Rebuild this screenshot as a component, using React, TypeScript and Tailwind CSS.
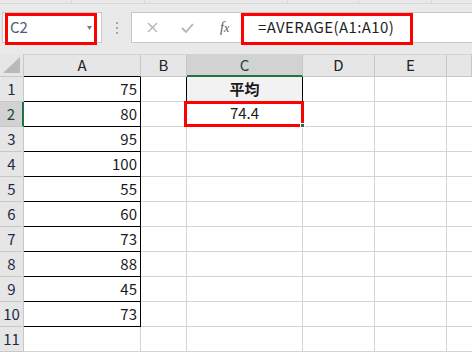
import React from "react";

const FONT = { fontFamily: '"Noto Sans CJK JP", "Noto Sans", sans-serif' };

const values = [75, 80, 95, 100, 55, 60, 73, 88, 45, 73];
const cols = ["A", "B", "C", "D", "E", ""];

const FormulaBar = () => (
  <div className="h-[54px] bg-[#e9e9e9]">
    {/* ribbon edge */}
    <div className="flex h-[4px] border-b border-[#d6d6d6]">
      <div className="w-[72px] border-r border-[#d6d6d6]" />
      <div className="w-[73px] border-r border-[#d6d6d6]" />
      <div className="w-[143px] border-r border-[#d6d6d6]" />
      <div className="w-[71px] border-r border-[#d6d6d6]" />
      <div className="w-[73px] border-r border-[#d6d6d6]" />
    </div>

    <div className="flex items-start pt-[8px]">
      {/* name box */}
      <div className="relative ml-[2px] flex h-[31px] w-[100px] items-center border border-[#c8c8c8] bg-white pl-[7px]">
        <span className="text-[15px] text-[#4a5d7a]">C2</span>
        <svg className="absolute left-[84px] top-[13px]" width="5" height="4" viewBox="0 0 5 4">
          <polygon points="0,0 5,0 2.5,4" fill="#7a7a7a" />
        </svg>
        <div className="absolute left-[2px] top-[0px] h-[32px] w-[92px] border-[3px] border-[#ff0000]" />
      </div>

      {/* splitter dots */}
      <div className="ml-[14px] mt-[10px] flex flex-col gap-[3px]">
        <span className="h-[2px] w-[2px] bg-[#a6a6a6]" />
        <span className="h-[2px] w-[2px] bg-[#a6a6a6]" />
        <span className="h-[2px] w-[2px] bg-[#a6a6a6]" />
      </div>

      {/* icons + formula */}
      <div className="relative ml-[13px] flex h-[31px] flex-1 items-center border border-r-0 border-[#c8c8c8] bg-white">
        <div className="flex w-[110px] items-center">
          <svg className="ml-[15px]" width="11" height="11" viewBox="0 0 11 11">
            <path d="M1 1 L10 10 M10 1 L1 10" stroke="#b4b4b4" strokeWidth="1.4" />
          </svg>
          <svg className="ml-[23px]" width="13" height="10" viewBox="0 0 13 10">
            <path d="M1 5 L5 9 L12 1" stroke="#b4b4b4" strokeWidth="1.8" fill="none" />
          </svg>
          <span
            className="ml-[26px] text-[14px] italic text-[#595959]"
            style={{ fontFamily: '"Liberation Serif", serif' }}
          >
            f<span className="text-[12px]">x</span>
          </span>
        </div>
        <span className="ml-[16px] text-[15px] tracking-[0.4px] text-[#1f1f1f]">=AVERAGE(A1:A10)</span>
        <div className="absolute left-[109px] top-[0px] h-[32px] w-[172px] border-[3px] border-[#ff0000]" />
      </div>
    </div>
  </div>
);

const Corner = () => (
  <div className="relative border-r border-b border-[#c8c8c8] bg-[#e6e6e6]">
    <svg className="absolute bottom-[3px] right-[3px]" width="17" height="16" viewBox="0 0 17 16">
      <polygon points="17,0 17,16 0,16" fill="#b9b9b9" />
    </svg>
  </div>
);

export default function App() {
  return (
    <div className="h-[352px] w-[472px] overflow-hidden bg-white" style={FONT}>
      <FormulaBar />
      <div className="grid grid-cols-[24px_117px_46px_116px_72px_72px_1fr] grid-rows-[23px_repeat(11,25px)]">
        {/* header row */}
        <Corner />
        {cols.map((c) => (
          <div
            key={c || "F"}
            className={
              c === "C"
                ? "flex items-center justify-center border-t border-r border-b-2 border-t-[#d4d4d4] border-r-[#c8c8c8] border-b-[#217346] bg-[#d2d2d2] text-[15px] text-[#1e4a34]"
                : c === "A"
                  ? "flex items-center justify-center border-t border-r border-b border-t-[#d4d4d4] border-r-[#c8c8c8] border-b-black bg-[#e6e6e6] text-[15px] text-[#222]"
                  : "flex items-center justify-center border-t border-r border-b border-t-[#d4d4d4] border-r-[#c8c8c8] border-b-[#c8c8c8] bg-[#e6e6e6] text-[15px] text-[#222]"
            }
          >
            {c}
          </div>
        ))}

        {Array.from({ length: 11 }, (_, i) => {
          const row = i + 1;
          const v = values[i];
          return (
            <React.Fragment key={row}>
              <div
                className={
                  row === 2
                    ? "flex items-center justify-center border-r-2 border-b border-r-[#217346] border-b-[#c8c8c8] bg-[#d2d2d2] text-[15px] text-[#1e4a34]"
                    : "flex items-center justify-center border-r border-b border-[#c8c8c8] bg-[#e6e6e6] text-[15px] text-[#1f2a44]"
                }
              >
                {row}
              </div>
              <div
                className={
                  v !== undefined
                    ? "flex items-center justify-end border-r border-b border-black pr-[3px] text-[15px] text-[#1a1a1a]"
                    : "border-r border-b border-[#d4d4d4]"
                }
              >
                {v}
              </div>
              <div
                className={
                  row === 1
                    ? "border-r border-b border-r-black border-b-[#d4d4d4]"
                    : "border-r border-b border-[#d4d4d4]"
                }
              />
              {row === 1 ? (
                <div className="flex items-center justify-center border-r border-b border-black bg-[#f2f2f2] text-[15px] font-bold text-[#1a1a1a]">
                  平均
                </div>
              ) : row === 2 ? (
                <div className="relative flex items-center justify-center border-b-2 border-r border-b-[#217346] border-r-[#d4d4d4] text-[15px] text-[#1a1a1a]">
                  74.4
                  <div className="absolute -left-[3px] -top-[1px] h-[26px] w-[120px] border-[3px] border-[#ff0000]" />
                  <div className="absolute -bottom-[3px] -right-[3px] h-[5px] w-[5px] border border-white bg-[#217346]" />
                </div>
              ) : (
                <div className="border-r border-b border-[#d4d4d4]" />
              )}
              <div className="border-r border-b border-[#d4d4d4]" />
              <div className="border-r border-b border-[#d4d4d4]" />
              <div className="border-b border-[#d4d4d4]" />
            </React.Fragment>
          );
        })}
      </div>
    </div>
  );
}
